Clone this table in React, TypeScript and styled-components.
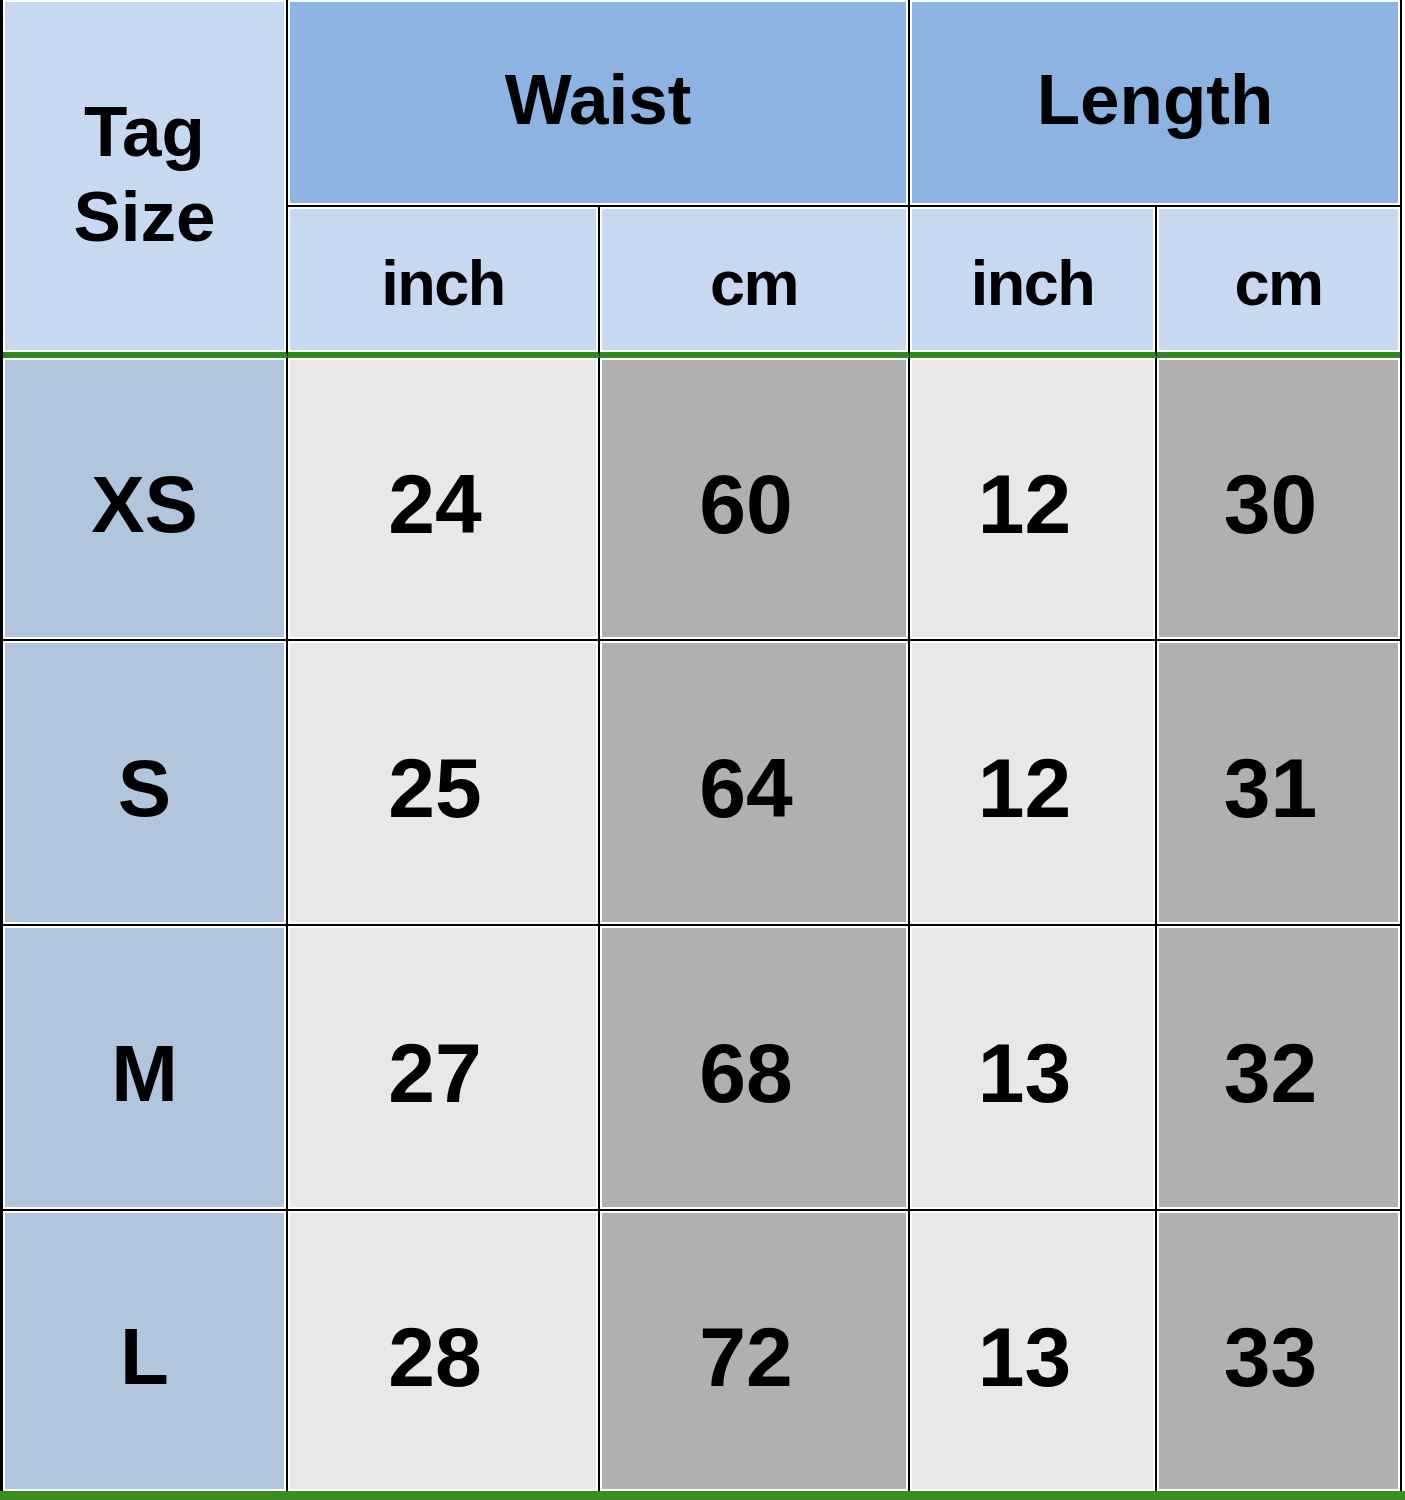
import React from 'react'
import styled, { createGlobalStyle, css } from 'styled-components'

const GlobalStyle = createGlobalStyle`
  html, body {
    margin: 0;
    padding: 0;
    background: #ffffff;
  }
  body {
    font-family: "Liberation Sans", Arial, sans-serif;
  }
`

const GREEN = '#2f8a1d'

const Page = styled.div`
  width: 1405px;
  height: 1500px;
  display: flex;
  flex-direction: column;
  overflow: hidden;
`

const Table = styled.table`
  width: 1402px;
  table-layout: fixed;
  border-collapse: separate;
  border-spacing: 0;
  border-left: 3px solid #000;
  border-right: 2px solid #000;
`

const Col = styled.col<{ $w: number }>`
  width: ${(p) => p.$w}px;
`

const baseCell = css`
  box-sizing: border-box;
  padding: 0;
  border-right: 2px solid #000;
  border-bottom: 2px solid #000;
  box-shadow: inset 0 0 0 2px #ffffff;
  text-align: center;
  vertical-align: middle;
  font-weight: 700;
  color: #000;
  &:last-child {
    border-right: none;
  }
`

const TagHead = styled.th`
  ${baseCell}
  height: 358px;
  background: #c6d9f1;
  border-bottom: 6px solid ${GREEN};
  font-size: 71px;
  line-height: 1.2;
`

const TagLines = styled.div`
  display: flex;
  flex-direction: column;
  align-items: center;
  padding-bottom: 4px;
`

const GroupHead = styled.th`
  ${baseCell}
  height: 207px;
  background: #8db3e2;
  font-size: 71px;
  padding-bottom: 6px;
`

const UnitHead = styled.th`
  ${baseCell}
  height: 151px;
  background: #c6d9f1;
  border-bottom: 6px solid ${GREEN};
  font-size: 63px;
  letter-spacing: -1.5px;
  padding-top: 6px;
`

const BodyRow = styled.tr<{ $h: number }>`
  height: ${(p) => p.$h}px;
  &:last-child td {
    border-bottom: none;
  }
`

const SizeCell = styled.td`
  ${baseCell}
  background: #b1c5dc;
  font-size: 80px;
  padding-top: 12px;
`

const ValueCell = styled.td<{ $dark: boolean }>`
  ${baseCell}
  background: ${(p) => (p.$dark ? '#b0b0b0' : '#e8e8e8')};
  font-size: 84px;
  padding: 12px 16px 0 0;
`

const GreenBar = styled.div`
  height: 10px;
  width: 100%;
  background: #3a8d1e;
`

const widths = [285, 312, 310, 247, 243]
const units = ['inch', 'cm', 'inch', 'cm']

const rows = [
  { tag: 'XS', v: ['24', '60', '12', '30'], h: 283 },
  { tag: 'S', v: ['25', '64', '12', '31'], h: 285 },
  { tag: 'M', v: ['27', '68', '13', '32'], h: 285 },
  { tag: 'L', v: ['28', '72', '13', '33'], h: 280 },
]

export default function App() {
  return (
    <>
      <GlobalStyle />
      <Page>
        <Table>
          <colgroup>
            {widths.map((w, i) => (
              <Col key={i} $w={w} />
            ))}
          </colgroup>
          <thead>
            <tr>
              <TagHead rowSpan={2}>
                <TagLines>
                  <span>Tag</span>
                  <span>Size</span>
                </TagLines>
              </TagHead>
              <GroupHead colSpan={2}>Waist</GroupHead>
              <GroupHead colSpan={2}>Length</GroupHead>
            </tr>
            <tr>
              {units.map((u, i) => (
                <UnitHead key={i}>{u}</UnitHead>
              ))}
            </tr>
          </thead>
          <tbody>
            {rows.map((r) => (
              <BodyRow key={r.tag} $h={r.h}>
                <SizeCell>{r.tag}</SizeCell>
                {r.v.map((val, j) => (
                  <ValueCell key={j} $dark={j % 2 === 1}>
                    {val}
                  </ValueCell>
                ))}
              </BodyRow>
            ))}
          </tbody>
        </Table>
        <GreenBar />
      </Page>
    </>
  )
}
